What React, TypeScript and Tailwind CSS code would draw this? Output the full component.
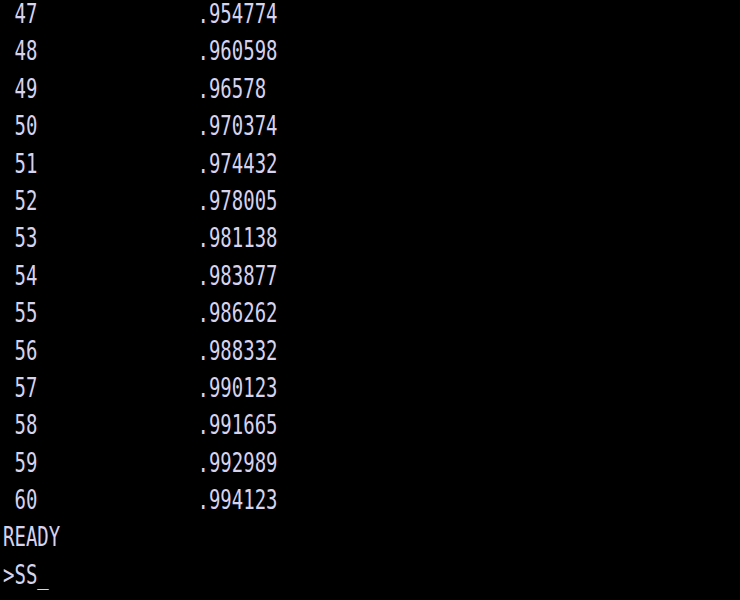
const rows: [string, string][] = [
  ['47', '.954774'],
  ['48', '.960598'],
  ['49', '.96578'],
  ['50', '.970374'],
  ['51', '.974432'],
  ['52', '.978005'],
  ['53', '.981138'],
  ['54', '.983877'],
  ['55', '.986262'],
  ['56', '.988332'],
  ['57', '.990123'],
  ['58', '.991665'],
  ['59', '.992989'],
  ['60', '.994123'],
]

function Line({ text }: { text: string }) {
  return (
    <div className="h-[37.4px]">
      <span className="block origin-top scale-y-[1.44] whitespace-pre leading-none">{text}</span>
    </div>
  )
}

export default function App() {
  return (
    <div
      className="h-[600px] w-[740px] overflow-hidden bg-black pl-[3px] text-[19px] text-[#d6d3ef]"
      style={{ fontFamily: '"DejaVu Sans Mono", monospace' }}
    >
      {rows.map(([n, v]) => (
        <Line key={n} text={' ' + n + ' '.repeat(14) + v} />
      ))}
      <Line text="READY" />
      <Line text=">SS_" />
    </div>
  )
}
